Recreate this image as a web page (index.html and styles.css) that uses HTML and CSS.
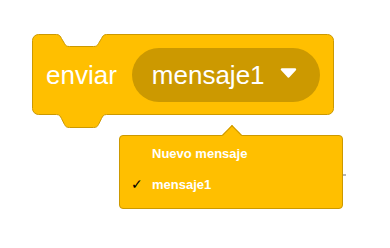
FILE: index.html
```html
<!DOCTYPE html>
<html lang="es">
<head>
    <meta charset="UTF-8">
    <title>enviar</title>
    <link rel="stylesheet" href="styles.css">
</head>
<body>
<div class="block">
    <svg class="block-shape" width="303" height="98" viewBox="-0.5 -0.5 303 98">
        <path d="M0,6 A6,6 0 0 1 6,0 H24 c3,0 4,2 5,4 l3,5 c1,2 2,3 5,3 h24 c3,0 4,-1 5,-3 l3,-5 c1,-2 2,-4 5,-4 H295 A6,6 0 0 1 301,6 V74 A6,6 0 0 1 295,80 H74 c-3,0 -4,2 -5,4 l-3,6 c-1,2 -2,3 -5,3 h-24 c-3,0 -4,-1 -5,-3 l-3,-6 c-1,-2 -2,-4 -5,-4 H6 A6,6 0 0 1 0,74 Z"
              fill="#ffbf00" stroke="#cc9900" stroke-width="1"/>
    </svg>
    <span class="label">enviar</span>
    <div class="field">
        <span class="field-text">mensaje1</span>
        <svg class="caret" width="17" height="10" viewBox="0 0 17 10">
            <polygon points="2,1.5 15,1.5 8.5,8.5" fill="#fff" stroke="#fff" stroke-width="2.4" stroke-linejoin="round"/>
        </svg>
    </div>

    <div class="menu">
        <div class="menu-arrow"></div>
        <div class="menu-item"><span class="check"></span>Nuevo mensaje</div>
        <div class="menu-item"><span class="check">✓</span>mensaje1</div>
    </div>
    <div class="edge-mark"></div>
</div>
</body>
</html>
```

FILE: styles.css
```css
* {
    padding: 0;
    margin: 0;
    box-sizing: border-box;
}

html, body {
    min-height: 248px;
}

body {
    background: #fff;
    font-family: "Liberation Sans", Arial, sans-serif;
    padding: 34px 0 0 32px;
}

.block {
    position: relative;
    width: 302px;
    height: 81px;
    display: flex;
    align-items: center;
    padding-left: 14px;
}

.block-shape {
    position: absolute;
    left: 0;
    top: 0;
}

.label {
    position: relative;
    color: #fff;
    font-size: 26px;
    line-height: 30px;
    margin-right: 15px;
}

.field {
    position: relative;
    display: flex;
    align-items: center;
    width: 188px;
    height: 54px;
    padding-left: 20px;
    border-radius: 27px;
    background: #cc9900;
    color: #fff;
    font-size: 26px;
    line-height: 30px;
}

.field-text {
    margin-right: 15px;
}

.caret {
    margin-top: -3px;
}

.menu {
    position: absolute;
    left: 87px;
    top: 101px;
    width: 224px;
    height: 74px;
    padding-top: 2px;
    background: #ffbf00;
    border: 1px solid #cc9900;
    border-radius: 4px;
    color: #fff;
    font-size: 13px;
    font-weight: bold;
}

.menu-arrow {
    position: absolute;
    left: 105px;
    top: -8px;
    width: 14px;
    height: 14px;
    background: #ffbf00;
    border-top: 1px solid #cc9900;
    border-left: 1px solid #cc9900;
    transform: rotate(45deg);
}

.menu-item {
    position: relative;
    display: flex;
    height: 31px;
    line-height: 31px;
    padding-left: 11px;
}

.check {
    width: 21px;
    color: #000;
    font-family: "DejaVu Sans", sans-serif;
    font-weight: normal;
    font-size: 14px;
}

.edge-mark {
    position: absolute;
    left: 311px;
    top: 140px;
    width: 3px;
    height: 2px;
    background: #b5b5b5;
}
```
